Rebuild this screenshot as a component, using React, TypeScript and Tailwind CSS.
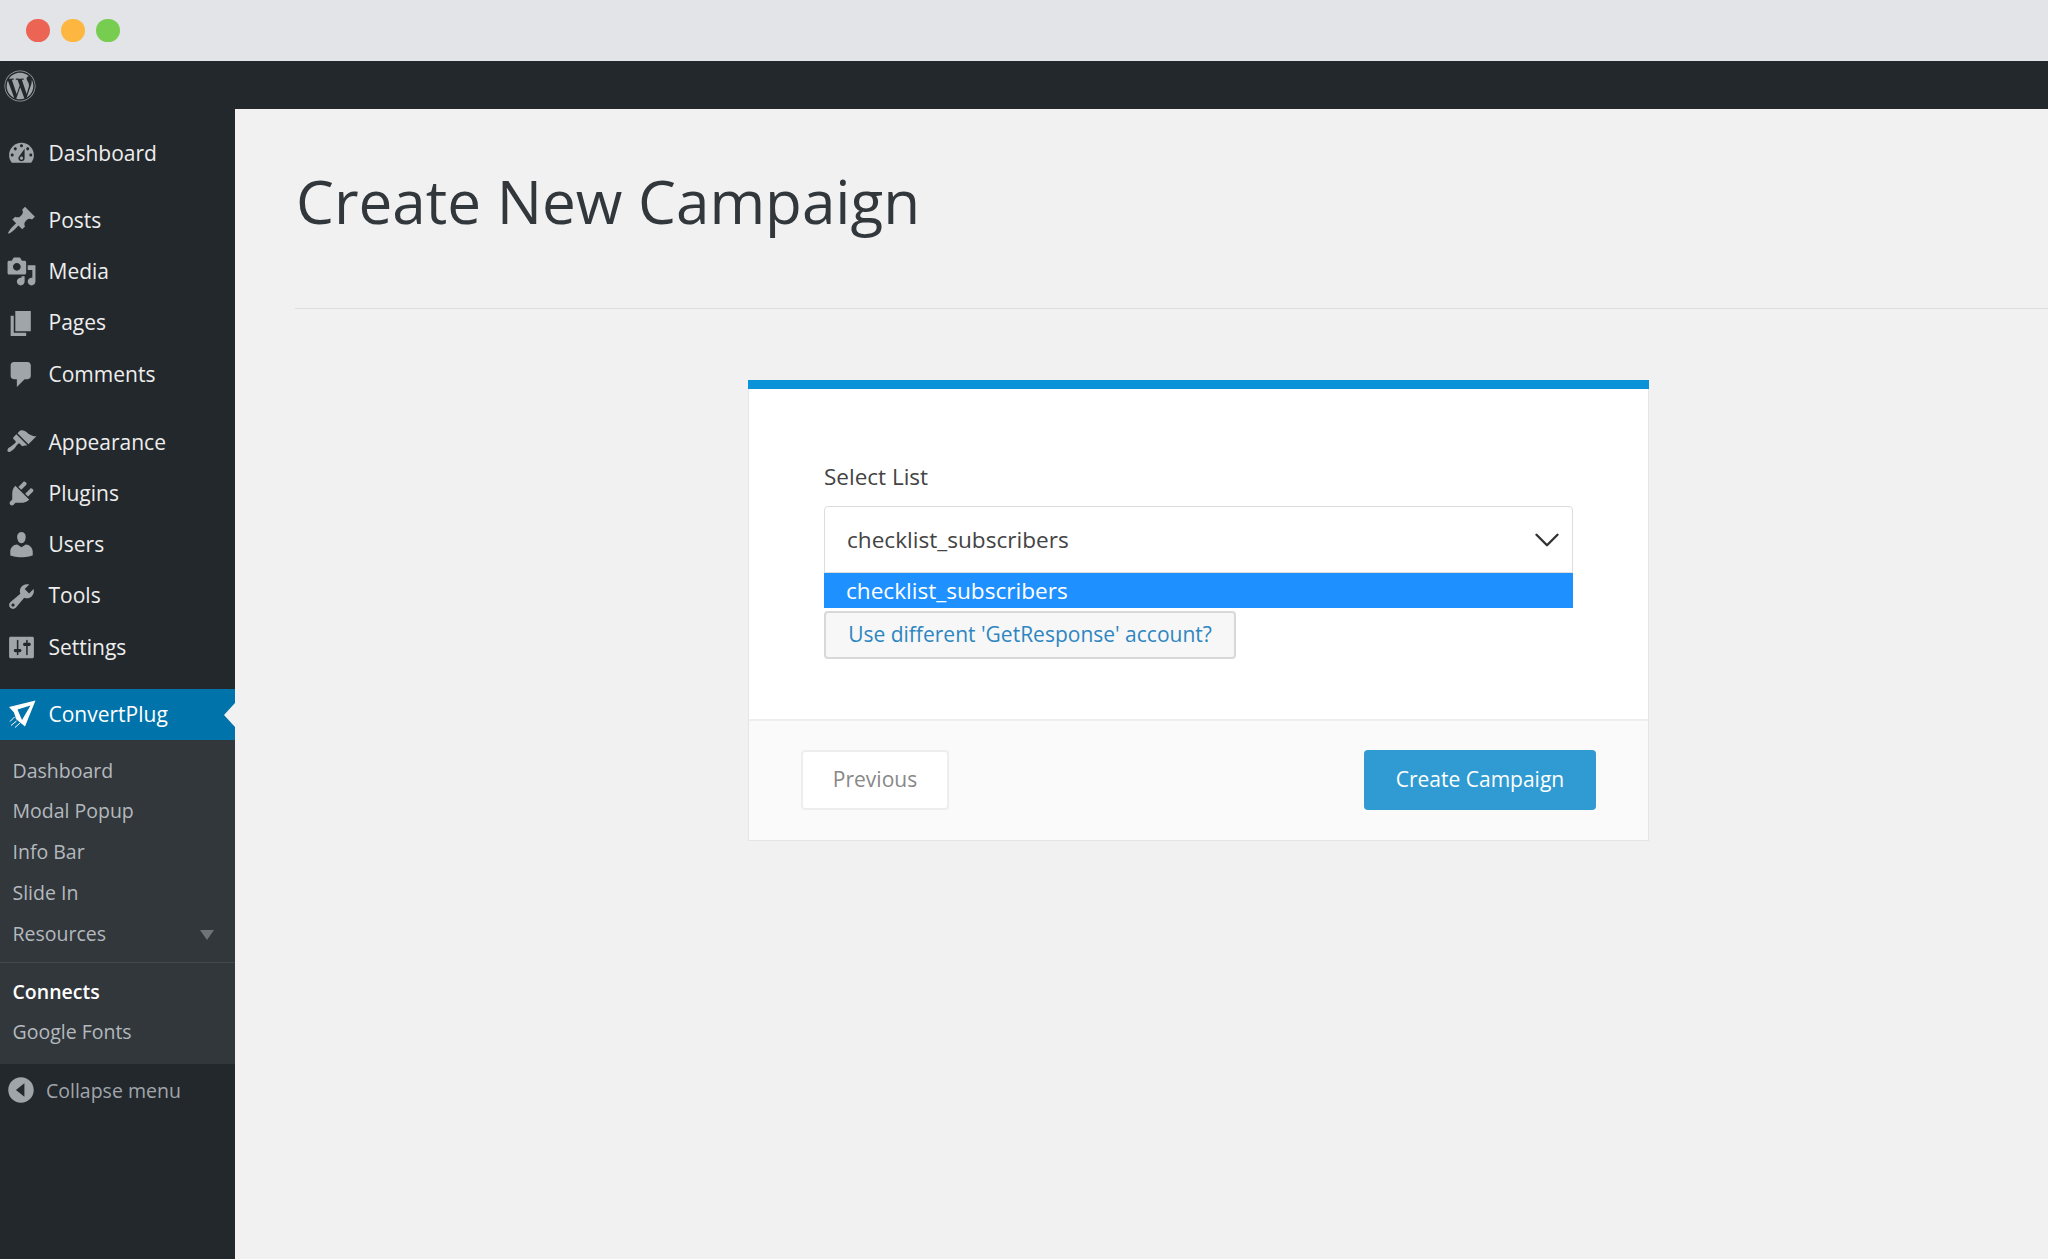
import { ChevronDown } from 'lucide-react'
import { FaWordpress } from 'react-icons/fa'

const icons: Record<string, string> = {
  dashboard: 'M3.76 16h12.48c1.1-1.37 1.76-3.11 1.76-5 0-4.42-3.58-8-8-8s-8 3.58-8 8c0 1.89.66 3.63 1.76 5zM10 4c.55 0 1 .45 1 1s-.45 1-1 1-1-.45-1-1 .45-1 1-1zM6 6c.55 0 1 .45 1 1s-.45 1-1 1-1-.45-1-1 .45-1 1-1zm8 0c.55 0 1 .45 1 1s-.45 1-1 1-1-.45-1-1 .45-1 1-1zm-5.37 5.55L12 7v6c0 1.1-.9 2-2 2s-2-.9-2-2c0-.57.24-1.08.63-1.45zM4 10c.55 0 1 .45 1 1s-.45 1-1 1-1-.45-1-1 .45-1 1-1zm12 0c.55 0 1 .45 1 1s-.45 1-1 1-1-.45-1-1 .45-1 1-1zm-5 3c0-.55-.45-1-1-1s-1 .45-1 1 .45 1 1 1 1-.45 1-1z',
  posts: 'M10.44 3.02l1.82-1.82 6.36 6.35-1.83 1.82c-1.05-.68-2.48-.57-3.41.36l-.75.75c-.92.93-1.04 2.35-.35 3.41l-1.83 1.82-2.41-2.41-2.8 2.79c-.42.42-3.38 2.71-3.8 2.29s1.86-3.39 2.28-3.81l2.79-2.79L4.1 9.36l1.83-1.82c1.05.69 2.48.57 3.4-.36l.75-.75c.93-.92 1.05-2.35.36-3.41z',
  media: 'M13 11V4c0-.55-.45-1-1-1h-1.67L9 1H5L3.67 3H2c-.55 0-1 .45-1 1v7c0 .55.45 1 1 1h10c.55 0 1-.45 1-1zM7 4.5c1.38 0 2.5 1.12 2.5 2.5S8.38 9.5 7 9.5 4.5 8.38 4.5 7 5.62 4.5 7 4.5zM14 6h5v10.5c0 1.38-1.12 2.5-2.5 2.5S14 17.88 14 16.5s1.12-2.5 2.5-2.5c.17 0 .34.02.5.05V9h-3V6zm-4 8.05V13h2v3.5c0 1.38-1.12 2.5-2.5 2.5S7 17.88 7 16.5 8.12 14 9.5 14c.17 0 .34.02.5.05z',
  pages: 'M6 15V2h10v13H6zm-1 1h8v2H3V5h2v11z',
  comments: 'M5 2h9c1.1 0 2 .9 2 2v7c0 1.1-.9 2-2 2h-2l-5 5v-5H5c-1.1 0-2-.9-2-2V4c0-1.1.9-2 2-2z',
  appearance: 'M14.48 11.06L7.41 3.99l1.5-1.5c.5-.56 2.3-.47 3.51.32 1.21.8 1.43 1.28 2.91 2.1 1.18.64 2.45 1.26 4.45.85zm-.71.71L6.7 4.7 4.93 6.47c-.39.39-.39 1.02 0 1.41l1.06 1.06c.39.39.39 1.03 0 1.42-.6.6-1.43 1.11-2.21 1.69-.35.26-.7.53-1.01.84C1.43 13.23.4 14.98 1.2 15.8c.8.79 2.56-.25 3.91-1.57.31-.31.58-.66.85-1.01.58-.78 1.09-1.61 1.69-2.21.39-.39 1.02-.39 1.41 0l1.06 1.06c.39.39 1.02.39 1.41 0z',
  plugins: 'M13.11 4.36L9.87 7.6 8 5.73l3.24-3.24c.35-.34 1.05-.2 1.56.32.52.51.66 1.21.31 1.55zm-8 1.77l.91-1.12 9.01 9.01-1.19.84c-.71.71-2.63 1.16-3.82 1.16H6.14L4.9 17.26c-.59.59-1.54.59-2.12 0-.59-.58-.59-1.53 0-2.12l1.24-1.24v-3.88c0-1.13.4-3.19 1.09-3.89zm7.26 3.97l3.24-3.24c.34-.35 1.04-.21 1.55.31.52.51.66 1.21.31 1.55l-3.24 3.25z',
  users: 'M10 9.25c-2.27 0-2.73-3.44-2.73-3.44C7 4.02 7.82 2 9.97 2c2.16 0 2.98 2.02 2.71 3.81 0 0-.41 3.44-2.68 3.44zm0 2.57L12.72 10c2.39 0 4.52 2.33 4.52 4.53v2.49s-3.65 1.13-7.24 1.13c-3.65 0-7.24-1.13-7.24-1.13v-2.49c0-2.25 1.94-4.48 4.47-4.48z',
  tools: 'M16.68 9.77c-1.34 1.34-3.3 1.67-4.95.99l-5.41 6.52c-.99.99-2.59.99-3.58 0s-.99-2.59 0-3.57l6.52-5.42c-.68-1.65-.35-3.61.99-4.95 1.28-1.28 3.12-1.62 4.72-1.06l-2.89 2.89 2.82 2.82 2.86-2.87c.53 1.58.18 3.39-1.08 4.65zM3.81 16.21c.4.39 1.04.39 1.43 0 .4-.4.4-1.04 0-1.43-.39-.4-1.03-.4-1.43 0-.39.39-.39 1.03 0 1.43z',
  settings: 'M18 16V4c0-.55-.45-1-1-1H3c-.55 0-1 .45-1 1v12c0 .55.45 1 1 1h14c.55 0 1-.45 1-1zM8 11h1c.55 0 1 .45 1 1s-.45 1-1 1H8v1.5c0 .28-.22.5-.5.5s-.5-.22-.5-.5V13H6c-.55 0-1-.45-1-1s.45-1 1-1h1V5.5c0-.28.22-.5.5-.5s.5.22.5.5V11zm5-2h-1c-.55 0-1-.45-1-1s.45-1 1-1h1V5.5c0-.28.22-.5.5-.5s.5.22.5.5V7h1c.55 0 1 .45 1 1s-.45 1-1 1h-1v5.5c0 .28-.22.5-.5.5s-.5-.22-.5-.5V9z',
  collapse: 'M10 2.5c-4.14 0-7.5 3.36-7.5 7.5s3.36 7.5 7.5 7.5 7.5-3.36 7.5-7.5-3.36-7.5-7.5-7.5zM12 14l-5-4 5-4z',
}

function MenuItem({ icon, label }: { icon: string; label: string }) {
  return (
    <div className="h-[51.2px] flex items-center pl-[6px] gap-[11.5px] text-[21px] text-[#eeeeee]">
      <svg viewBox="0 0 20 20" className="w-[31px] h-[31px] shrink-0 fill-[#a0a5aa]">
        <path d={icons[icon]} fillRule="evenodd" />
      </svg>
      <span>{label}</span>
    </div>
  )
}

function SubItem({ label, active }: { label: string; active?: boolean }) {
  return (
    <div className={`h-[40.8px] flex items-center pl-[12.5px] text-[19.5px] ${active ? 'text-white font-semibold' : 'text-[#b4b9be]'}`}>
      {label}
    </div>
  )
}

export default function App() {
  return (
    <div className="w-[2048px] h-[1259px] overflow-hidden flex flex-col bg-[#f1f1f1] font-['Open_Sans',sans-serif]">
      {/* window chrome */}
      <div className="h-[61px] shrink-0 bg-[#e2e4e8] flex items-center pl-[26px] gap-[11.5px]">
        <span className="w-[23.5px] h-[23.5px] rounded-full bg-[#ec6453]" />
        <span className="w-[23.5px] h-[23.5px] rounded-full bg-[#fdb63f]" />
        <span className="w-[23.5px] h-[23.5px] rounded-full bg-[#77cd4f]" />
      </div>

      {/* admin bar */}
      <div className="h-[48px] shrink-0 bg-[#23282d] flex items-center pl-[4px]">
        <FaWordpress className="w-[32px] h-[32px] text-[#a0a5aa] mt-[2px]" />
      </div>

      <div className="flex-1 flex min-h-0">
        {/* sidebar */}
        <div className="w-[235px] shrink-0 bg-[#23282d] pt-[19px]">
          <MenuItem icon="dashboard" label="Dashboard" />
          <div className="mt-[16px]">
            <MenuItem icon="posts" label="Posts" />
            <MenuItem icon="media" label="Media" />
            <MenuItem icon="pages" label="Pages" />
            <MenuItem icon="comments" label="Comments" />
          </div>
          <div className="mt-[17px]">
            <MenuItem icon="appearance" label="Appearance" />
            <MenuItem icon="plugins" label="Plugins" />
            <MenuItem icon="users" label="Users" />
            <MenuItem icon="tools" label="Tools" />
            <MenuItem icon="settings" label="Settings" />
          </div>
          <div className="relative mt-[16px] h-[51px] bg-[#0073aa] flex items-center pl-[8px] gap-[12.5px] text-[21px] text-white">
            <svg viewBox="8 12 28 28" className="w-[28px] h-[28px] shrink-0">
              <path d="M35.5 12.5 L9 19 L14 24.5 L16 31 L25 38.5 Z M17.5 21.5 L30.5 17.5 L22 32 Z" fill="#ffffff" fillRule="evenodd" />
              <path d="M14.5 29 L10 33.5 M16.5 33 L11 37.5 M20 35 L15 39.5" stroke="#ffffff" strokeWidth="1" fill="none" />
            </svg>
            <span>ConvertPlug</span>
            <span className="absolute right-0 top-[14px] border-y-[12px] border-y-transparent border-r-[11px] border-r-[#f1f1f1]" />
          </div>
          <div className="bg-[#32373c] pt-[10px] pb-[12px]">
            <SubItem label="Dashboard" />
            <SubItem label="Modal Popup" />
            <SubItem label="Info Bar" />
            <SubItem label="Slide In" />
            <div className="relative">
              <SubItem label="Resources" />
              <span className="absolute right-[21px] top-[17px] border-x-[7px] border-x-transparent border-t-[10px] border-t-[#6f7479]" />
            </div>
            <div className="mt-[8px] mb-[8px] border-t border-[#44494e]" />
            <SubItem label="Connects" active />
            <SubItem label="Google Fonts" />
          </div>
          <div className="flex items-center pl-[4px] gap-[8px] h-[52px] text-[19.5px] text-[#a0a5aa]">
            <svg viewBox="0 0 20 20" className="w-[34px] h-[34px] shrink-0 fill-[#a0a5aa]">
              <path d={icons.collapse} fillRule="evenodd" />
            </svg>
            <span>Collapse menu</span>
          </div>
        </div>

        {/* content */}
        <div className="flex-1 min-w-0 pl-[60px]">
          <h1 className="text-[60.2px] leading-[84px] pt-[50px] pl-[1px] text-[#32373c]">Create New Campaign</h1>
          <div className="mt-[65px] border-t border-[#dddddd]" />
          <div className="ml-[453px] mt-[71px] w-[901px] border border-[#e5e5e5] border-t-0 bg-white">
            <div className="h-[9px] bg-[#0b93d9] -mx-px" />
            <div className="px-[75px] pt-[73px] h-[330px]">
              <div className="text-[22.5px] leading-[30px] text-[#444444]">Select List</div>
              <div className="mt-[14px] h-[67px] flex items-center justify-between pl-[22px] pr-[4px] border border-[#dddddd] rounded-t-[4px] text-[22.6px] text-[#444444]">
                <span>checklist_subscribers</span>
                <ChevronDown className="w-[42px] h-[42px] text-[#333333]" strokeWidth={1.4} />
              </div>
              <div className="h-[35px] flex items-center pl-[22px] bg-[#1e90ff] text-[22.6px] text-white">checklist_subscribers</div>
              <div className="mt-[3px] w-[412px] h-[48px] flex items-center justify-center border-2 border-[#d8d8d8] rounded-[4px] bg-[#f7f7f7] text-[21px] text-[#2e86c1]">
                Use different 'GetResponse' account?
              </div>
            </div>
            <div className="h-[121px] border-t-2 border-[#eeeeee] bg-[#fafafa] flex items-start justify-between pt-[29px] pl-[52px] pr-[52px]">
              <div className="w-[148px] h-[60px] flex items-center justify-center border-2 border-[#eeeeee] rounded-[4px] bg-white text-[21px] text-[#888888]">Previous</div>
              <div className="w-[232px] h-[60px] flex items-center justify-center rounded-[4px] bg-[#2f9bd2] text-[21px] text-white">Create Campaign</div>
            </div>
          </div>
        </div>
      </div>
    </div>
  )
}
